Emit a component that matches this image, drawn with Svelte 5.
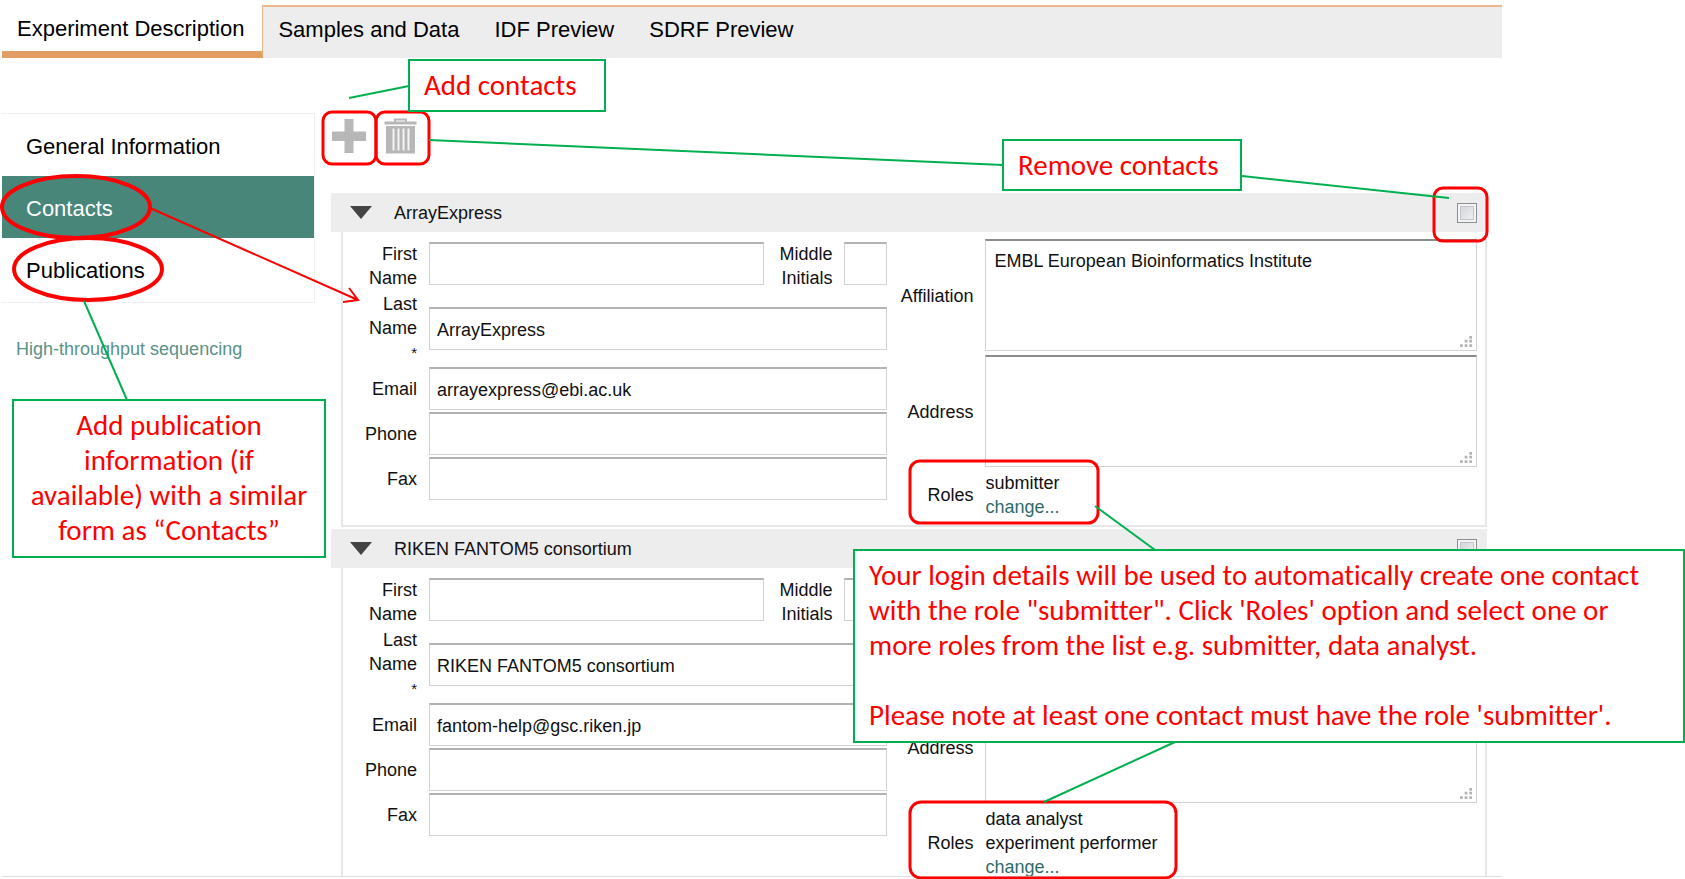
<script>
  const tabs = ['Experiment Description', 'Samples and Data', 'IDF Preview', 'SDRF Preview'];
  const sections = ['General Information', 'Contacts', 'Publications'];
  let activeTab = $state(0);
  let activeSection = $state(1);

  let contacts = $state([
    {
      title: 'ArrayExpress',
      first: '',
      middle: '',
      last: 'ArrayExpress',
      email: 'arrayexpress@ebi.ac.uk',
      phone: '',
      fax: '',
      affiliation: 'EMBL European Bioinformatics Institute',
      address: '',
      roles: ['submitter'],
      selected: false,
    },
    {
      title: 'RIKEN FANTOM5 consortium',
      first: '',
      middle: '',
      last: 'RIKEN FANTOM5 consortium',
      email: 'fantom-help@gsc.riken.jp',
      phone: '',
      fax: '',
      affiliation: '',
      address: '',
      roles: ['data analyst', 'experiment performer'],
      selected: false,
    },
  ]);
</script>

{#snippet grip()}
  <svg class="grip" viewBox="0 0 14 14" aria-hidden="true">
    <path d="M10 1h3v3h-3zM5 5h3v3h-3zM10 5h3v3h-3zM0 10h3v3h-3zM5 10h3v3h-3zM10 10h3v3h-3z" fill="#b4b4b4" />
  </svg>
{/snippet}

<div class="page">
  <div class="frame">
    <nav class="tabs">
      {#each tabs as tab, i}
        <button class="tab" class:active={i === activeTab} onclick={() => (activeTab = i)}>{tab}</button>
      {/each}
    </nav>

    <div class="columns">
      <aside>
        <nav class="sections">
          {#each sections as section, i}
            <button class="section" class:active={i === activeSection} onclick={() => (activeSection = i)}>{section}</button>
          {/each}
        </nav>
        <p class="kind">High-throughput sequencing</p>
      </aside>

      <main>
        <div class="toolbar">
          <button class="tool" aria-label="Add contact">
            <svg viewBox="0 0 36 36"><path d="M13.500 1h9v12.500h12.500v9.500h-12.500v12h-9v-12h-12.500v-9.500h12.500z" fill="#b7b7b7" /></svg>
          </button>
          <button class="tool" aria-label="Remove contacts">
            <svg viewBox="0 0 36 36">
              <path d="M13 4V1.500h11V4" fill="none" stroke="#b7b7b7" stroke-width="2" />
              <path d="M2.500 3.500h32v3h-32z" fill="#b7b7b7" />
              <path d="M4 8h29v27.500h-29z" fill="#b7b7b7" />
              <path d="M11.500 10.500v22M16.500 10.500v22M21.500 10.500v22M26.500 10.500v22" stroke="#f4f4f4" stroke-width="2" />
            </svg>
          </button>
        </div>

        {#each contacts as contact, i}
          <section class="card">
            <header>
              <button class="toggle" aria-label="Collapse {contact.title}">
                <svg viewBox="0 0 22 13"><path d="M0 0h22L11 13z" fill="#444" /></svg>
              </button>
              <h2>{contact.title}</h2>
              <input type="checkbox" class="pick" aria-label="Select {contact.title}" bind:checked={contact.selected} />
            </header>
            <div class="body">
              <div class="left">
                <label for="first{i}">First Name</label>
                <div class="names">
                  <input id="first{i}" type="text" bind:value={contact.first} />
                  <label for="middle{i}">Middle Initials</label>
                  <input id="middle{i}" type="text" bind:value={contact.middle} />
                </div>
                <label for="last{i}">Last Name <small>*</small></label>
                <input id="last{i}" type="text" bind:value={contact.last} />
                <label for="email{i}">Email</label>
                <input id="email{i}" type="text" bind:value={contact.email} />
                <label for="phone{i}">Phone</label>
                <input id="phone{i}" type="text" bind:value={contact.phone} />
                <label for="fax{i}">Fax</label>
                <input id="fax{i}" type="text" bind:value={contact.fax} />
              </div>
              <div class="right">
                <label for="affiliation{i}">Affiliation</label>
                <div class="area"><textarea id="affiliation{i}" bind:value={contact.affiliation}></textarea>{@render grip()}</div>
                <label for="address{i}">Address</label>
                <div class="area"><textarea id="address{i}" bind:value={contact.address}></textarea>{@render grip()}</div>
                <span class="name">Roles</span>
                <div class="roles">
                  {#each contact.roles as role}<span>{role}</span>{/each}
                  <a href="#roles{i}">change...</a>
                </div>
              </div>
            </div>
          </section>
        {/each}
      </main>
    </div>
  </div>

  <svg class="marks" aria-hidden="true">
    <g fill="none" stroke="#f00" stroke-width="3">
      <rect x="323" y="112" width="53" height="52" rx="9" />
      <rect x="376" y="112" width="53" height="52" rx="9" />
      <rect x="1434" y="188" width="53" height="53" rx="9" />
      <rect x="910" y="461" width="188" height="62" rx="10" />
      <rect x="910" y="802" width="266" height="76" rx="11" />
      <ellipse cx="76" cy="207" rx="74" ry="31" stroke-width="4" />
      <ellipse cx="88" cy="269" rx="74" ry="31" stroke-width="4" />
      <path d="M150 208L358 300M349 288L358 300L343 302" stroke-width="2" />
    </g>
    <path
      d="M349 98L409 86M429 140L1003 165M1242 176L1449 198M84 301L127 400M1095 506L1155 550M1175 742L1044 802"
      fill="none"
      stroke="#00b050"
      stroke-width="2"
    />
  </svg>

  <div class="note add">Add contacts</div>
  <div class="note remove">Remove contacts</div>
  <div class="note publications">Add publication<br />information (if<br />available) with a similar<br />form as “Contacts”</div>
  <div class="note login">
    <p>Your login details will be used to automatically create one contact<br />with the role "submitter". Click 'Roles' option and select one or<br />more roles from the list e.g. submitter, data analyst.</p>
    <p>Please note at least one contact must have the role 'submitter'.</p>
  </div>
</div>

<style>
  :global(body) {
    background: #fff;
  }
  .page {
    position: relative;
    height: 100vh;
    overflow: hidden;
    font: 18px/24px 'Liberation Sans', Arial, sans-serif;
    color: #111;
  }
  .page :global(*) {
    box-sizing: border-box;
  }
  button {
    font: inherit;
    color: inherit;
    background: none;
    border: 0;
    padding: 0;
    cursor: pointer;
  }
  .frame {
    height: calc(100vh - 2px);
    margin: 0 183px 0 2px;
    padding-top: 5px;
    overflow: hidden;
    border-bottom: 1px solid #ddd;
  }
  .tabs {
    display: flex;
    height: 53px;
    background: #ededed;
    border-top: 2px solid #ecb88a;
  }
  .tab {
    padding: 0 20px 6px 15px;
    font-size: 22px;
    color: #000;
    white-space: nowrap;
  }
  .tab.active {
    margin-top: -2px;
    padding: 2px 18px 0 15px;
    background: #fff;
    border-right: 1px solid #ecb88a;
    border-bottom: 7px solid #e39f63;
  }
  .columns {
    display: grid;
    grid-template-columns: 313px minmax(0, 1fr);
    column-gap: 16px;
  }
  aside {
    padding-top: 55px;
  }
  .sections {
    display: grid;
    padding-bottom: 2px;
    border: solid #f0f0f0;
    border-width: 1px 1px 1px 0;
  }
  .section {
    height: 62px;
    padding: 4px 24px 0;
    font-size: 22px;
    color: #000;
    text-align: left;
  }
  .section.active {
    background: #48867a;
    color: #fff;
  }
  .kind {
    margin: 34px 14px 0;
    color: #599287;
  }
  main {
    padding-right: 15px;
  }
  .toolbar {
    display: flex;
    gap: 15px;
    height: 135px;
    padding-top: 60px;
  }
  .tool,
  .tool svg {
    display: block;
    width: 36px;
    height: 36px;
  }
  .card {
    margin-bottom: 2px;
  }
  header {
    display: flex;
    align-items: center;
    height: 39px;
    padding: 0 10px 0 19px;
    background: #ededed;
  }
  .toggle,
  .toggle svg {
    display: block;
    width: 22px;
    height: 13px;
  }
  h2 {
    flex: 1;
    margin: 0 0 0 22px;
    font-size: 18px;
    font-weight: 400;
  }
  .pick {
    appearance: none;
    width: 20px;
    height: 20px;
    margin: 0;
    border: 1px solid #8e8f8f;
    background: linear-gradient(135deg, #cbcfd5, #f6f6f6);
    box-shadow: inset 0 0 0 2px #f4f4f4, inset 0 0 0 3px #c3c7cc;
  }
  .body {
    display: grid;
    grid-template-columns: minmax(0, 544fr) minmax(0, 577fr);
    column-gap: 12px;
    margin-left: 10px;
    padding: 7px 8px 6px 0;
    border: solid #e6e6e6;
    border-width: 0 2px 2px;
  }
  .left {
    display: grid;
    grid-template-columns: 74px minmax(0, 1fr);
    grid-template-rows: 48px 73px 43px 43px 43px;
    align-content: start;
    align-items: center;
    gap: 2px 12px;
    padding-top: 3px;
  }
  .names {
    display: grid;
    grid-template-columns: minmax(0, 1fr) 56px 43px;
    column-gap: 12px;
    align-self: start;
  }
  label,
  .name {
    text-align: right;
  }
  .left > label {
    padding-left: 20px;
  }
  small {
    font-size: 15px;
  }
  input[type='text'],
  textarea {
    display: block;
    width: 100%;
    height: 43px;
    margin: 0;
    padding: 3px 7px 0;
    font: inherit;
    color: inherit;
    background: #fff;
    border: 1px solid #d2d2d2;
    border-top: 2px solid #b2b2b2;
    border-radius: 0;
  }
  .right {
    display: grid;
    grid-template-columns: 74px minmax(0, 1fr);
    align-content: start;
    align-items: center;
    gap: 4px 12px;
  }
  .right > label {
    padding-top: 2px;
  }
  .area {
    position: relative;
  }
  textarea {
    height: 112px;
    padding: 8px 8px 0;
    resize: none;
    border-top-color: #8c8c8c;
  }
  .grip {
    position: absolute;
    right: 4px;
    bottom: 3px;
    width: 13px;
    height: 13px;
  }
  .roles {
    display: grid;
  }
  .roles a {
    color: #2f6c69;
    text-decoration: none;
  }
  .marks {
    position: absolute;
    inset: 0;
    width: 100%;
    height: 100%;
    pointer-events: none;
  }
  .note {
    position: absolute;
    padding: 7px 14px;
    border: 2px solid #00b050;
    background: #fff;
    color: #f00;
    font: 29px/35px Carlito, Lato, sans-serif;
    font-variant-ligatures: none;
    white-space: nowrap;
  }
  .note p {
    margin: 0 0 35px;
  }
  .add {
    left: 408px;
    top: 59px;
    width: 198px;
    height: 53px;
  }
  .remove {
    left: 1002px;
    top: 139px;
    width: 240px;
    height: 52px;
  }
  .publications {
    left: 12px;
    top: 399px;
    width: 314px;
    height: 159px;
    text-align: center;
  }
  .login {
    left: 853px;
    top: 549px;
    width: 832px;
    height: 194px;
  }
</style>
